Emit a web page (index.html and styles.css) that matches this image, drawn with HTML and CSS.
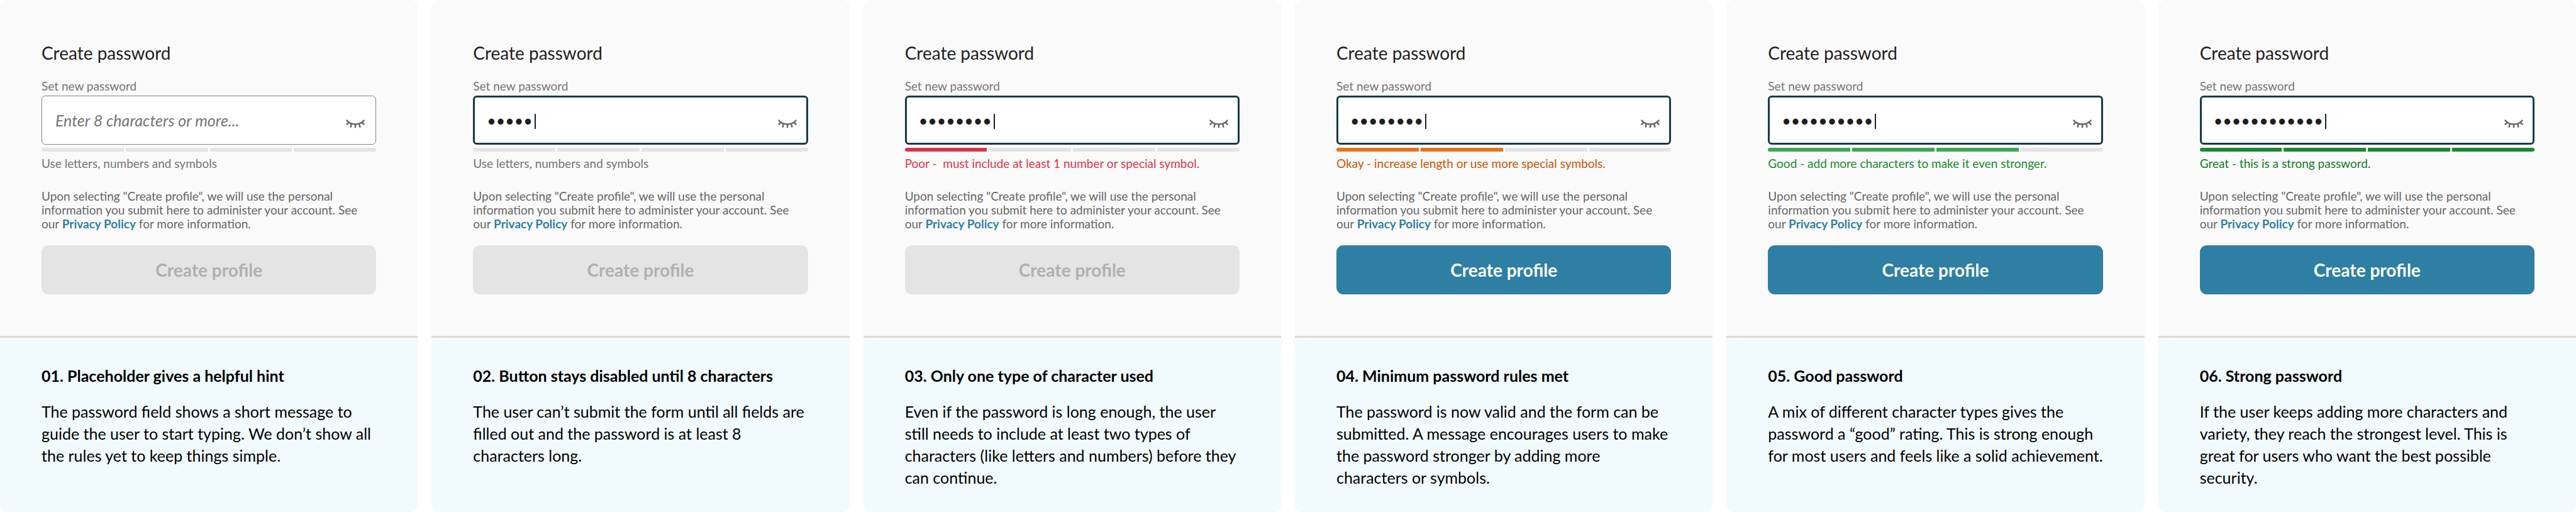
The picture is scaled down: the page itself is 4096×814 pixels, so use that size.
FILE: index.html
```
<!DOCTYPE html>
<html lang="en">
<head>
<meta charset="utf-8">
<title>Create password: field states</title>
<link rel="stylesheet" href="styles.css">
</head>
<body>
<svg class="sprite" aria-hidden="true">
  <symbol id="eye-closed" viewBox="0 -18 44 40">
    <path d="M2 2C7 8 14 11 22 11S37 8 42 2M6.5 6.5 2 11.2M37.5 6.5 42 11.2M12.8 9.8 11.2 17M31.2 9.8 32.8 17M22 11V18"/>
  </symbol>
</svg>
<main class="board">

  <article class="card">
    <form class="form">
      <h2 class="title">Create password</h2>
      <label class="label" for="pw1">Set new password</label>
      <div class="field">
        <input class="input" id="pw1" type="password" placeholder="Enter 8 characters or more...">
        <button class="reveal" type="button" aria-label="Show password"><svg class="eye"><use href="#eye-closed"/></svg></button>
      </div>
      <div class="meter"><span class="bar"></span><span class="bar"></span><span class="bar"></span><span class="bar"></span></div>
      <p class="hint">Use letters, numbers and symbols</p>
      <p class="legal">Upon selecting "Create profile", we will use the personal information you submit here to administer your account. See our <a class="link" href="#">Privacy Policy</a> for more information.</p>
      <button class="submit" type="button" disabled>Create profile</button>
    </form>
    <section class="note">
      <h3 class="note-title">01. Placeholder gives a helpful hint</h3>
      <p class="note-text">The password field shows a short message to guide the user to start typing. We don’t show all the rules yet to keep things simple.</p>
    </section>
  </article>

  <article class="card">
    <form class="form">
      <h2 class="title">Create password</h2>
      <label class="label" for="pw2">Set new password</label>
      <div class="field active">
        <input class="input" id="pw2" type="password" value="abcde"><span class="caret"></span>
        <button class="reveal" type="button" aria-label="Show password"><svg class="eye"><use href="#eye-closed"/></svg></button>
      </div>
      <div class="meter"><span class="bar"></span><span class="bar"></span><span class="bar"></span><span class="bar"></span></div>
      <p class="hint">Use letters, numbers and symbols</p>
      <p class="legal">Upon selecting "Create profile", we will use the personal information you submit here to administer your account. See our <a class="link" href="#">Privacy Policy</a> for more information.</p>
      <button class="submit" type="button" disabled>Create profile</button>
    </form>
    <section class="note">
      <h3 class="note-title">02. Button stays disabled until 8 characters</h3>
      <p class="note-text">The user can’t submit the form until all fields are filled out and the password is at least 8 characters long.</p>
    </section>
  </article>

  <article class="card poor">
    <form class="form">
      <h2 class="title">Create password</h2>
      <label class="label" for="pw3">Set new password</label>
      <div class="field active">
        <input class="input" id="pw3" type="password" value="abcdefgh"><span class="caret"></span>
        <button class="reveal" type="button" aria-label="Show password"><svg class="eye"><use href="#eye-closed"/></svg></button>
      </div>
      <div class="meter"><span class="bar on"></span><span class="bar"></span><span class="bar"></span><span class="bar"></span></div>
      <p class="hint">Poor -&nbsp; must include at least 1 number or special symbol.</p>
      <p class="legal">Upon selecting "Create profile", we will use the personal information you submit here to administer your account. See our <a class="link" href="#">Privacy Policy</a> for more information.</p>
      <button class="submit" type="button" disabled>Create profile</button>
    </form>
    <section class="note">
      <h3 class="note-title">03. Only one type of character used</h3>
      <p class="note-text">Even if the password is long enough, the user still needs to include at least two types of characters (like letters and numbers) before they can continue.</p>
    </section>
  </article>

  <article class="card okay">
    <form class="form">
      <h2 class="title">Create password</h2>
      <label class="label" for="pw4">Set new password</label>
      <div class="field active">
        <input class="input" id="pw4" type="password" value="abcdef12"><span class="caret"></span>
        <button class="reveal" type="button" aria-label="Show password"><svg class="eye"><use href="#eye-closed"/></svg></button>
      </div>
      <div class="meter"><span class="bar on"></span><span class="bar on"></span><span class="bar"></span><span class="bar"></span></div>
      <p class="hint">Okay - increase length or use more special symbols.</p>
      <p class="legal">Upon selecting "Create profile", we will use the personal information you submit here to administer your account. See our <a class="link" href="#">Privacy Policy</a> for more information.</p>
      <button class="submit" type="button">Create profile</button>
    </form>
    <section class="note">
      <h3 class="note-title">04. Minimum password rules met</h3>
      <p class="note-text">The password is now valid and the form can be submitted. A message encourages users to make the password stronger by adding more characters or symbols.</p>
    </section>
  </article>

  <article class="card good">
    <form class="form">
      <h2 class="title">Create password</h2>
      <label class="label" for="pw5">Set new password</label>
      <div class="field active">
        <input class="input" id="pw5" type="password" value="abcdef12!?"><span class="caret"></span>
        <button class="reveal" type="button" aria-label="Show password"><svg class="eye"><use href="#eye-closed"/></svg></button>
      </div>
      <div class="meter"><span class="bar on"></span><span class="bar on"></span><span class="bar on"></span><span class="bar"></span></div>
      <p class="hint">Good - add more characters to make it even stronger.</p>
      <p class="legal">Upon selecting "Create profile", we will use the personal information you submit here to administer your account. See our <a class="link" href="#">Privacy Policy</a> for more information.</p>
      <button class="submit" type="button">Create profile</button>
    </form>
    <section class="note">
      <h3 class="note-title">05. Good password</h3>
      <p class="note-text">A mix of different character types gives the password a “good” rating. This is strong enough for most users and feels like a solid achievement.</p>
    </section>
  </article>

  <article class="card great">
    <form class="form">
      <h2 class="title">Create password</h2>
      <label class="label" for="pw6">Set new password</label>
      <div class="field active">
        <input class="input" id="pw6" type="password" value="abcdef12!?XY"><span class="caret"></span>
        <button class="reveal" type="button" aria-label="Show password"><svg class="eye"><use href="#eye-closed"/></svg></button>
      </div>
      <div class="meter"><span class="bar on"></span><span class="bar on"></span><span class="bar on"></span><span class="bar on"></span></div>
      <p class="hint">Great - this is a strong password.</p>
      <p class="legal">Upon selecting "Create profile", we will use the personal information you submit here to administer your account. See our <a class="link" href="#">Privacy Policy</a> for more information.</p>
      <button class="submit" type="button">Create profile</button>
    </form>
    <section class="note">
      <h3 class="note-title">06. Strong password</h3>
      <p class="note-text">If the user keeps adding more characters and variety, they reach the strongest level. This is great for users who want the best possible security.</p>
    </section>
  </article>

</main>
</body>
</html>
```
FILE: styles.css
```
* {
  box-sizing: border-box;
}

body {
  margin: 0;
  background: #fff;
  font-family: Lato, "Liberation Sans", sans-serif;
}

.sprite {
  display: none;
}

.board {
  display: grid;
  grid-template-columns: repeat(6, 1fr);
  gap: 22px;
  min-height: 100vh;
}

.card {
  --hint: #757575;
  --meter: #e4e4e4;
  display: flex;
  flex-direction: column;
  overflow: hidden;
  border-radius: 11px;
  background: #f1fafd;
}

.poor {
  --hint: #de3348;
  --meter: #de3348;
}

.okay {
  --hint: #c95500;
  --meter: #e97215;
}

.good {
  --hint: #158a2e;
  --meter: #38a852;
}

.great {
  --hint: #137a29;
  --meter: #158a2e;
}

.form {
  display: flex;
  flex-direction: column;
  padding: 67px 66px 66px;
  border-bottom: 3px solid #dedad0;
  background: #fafafa;
}

.title {
  margin: 0 0 24px;
  font-size: 28px;
  font-weight: 400;
  line-height: 34px;
  color: #1f1f1f;
}

.label {
  margin-bottom: 4px;
  font-size: 19px;
  line-height: 23px;
  color: #757575;
}

.field {
  display: flex;
  align-items: center;
  height: 78px;
  padding: 0 17px 0 21px;
  border: 1px solid #858585;
  border-radius: 6px;
  background: #fff;
}

.field.active {
  padding: 0 15px 0 19px;
  border: 3px solid #173a4a;
}

.input {
  flex: 1;
  min-width: 0;
  padding: 0;
  border: 0;
  outline: 0;
  background: none;
  font: 25px/30px Lato, "Liberation Sans", sans-serif;
  color: #1f1f1f;
}

.active .input {
  flex: none;
  field-sizing: content;
}

.input::placeholder {
  font-style: italic;
  color: #757575;
  opacity: 1;
}

.caret {
  width: 2px;
  height: 24px;
  margin: 4px 0 0 3px;
  background: #1f1f1f;
}

.reveal {
  display: flex;
  margin-left: auto;
  padding: 0;
  border: 0;
  background: none;
}

.eye {
  width: 30px;
  height: 27px;
  fill: none;
  stroke: #666;
  stroke-width: 3.7;
  stroke-linecap: round;
}

.meter {
  display: flex;
  gap: 3px;
  margin: 5px 0 7px;
  overflow: hidden;
  border-radius: 3px;
}

.bar {
  flex: 1;
  height: 6px;
  background: #e4e4e4;
}

.bar.on {
  background: var(--meter);
}

.hint {
  margin: 0 0 30px;
  font-size: 19px;
  line-height: 23px;
  color: var(--hint);
}

.legal {
  margin: 0 0 23px;
  font-size: 19px;
  line-height: 22px;
  color: #666;
}

.link {
  font-weight: 700;
  color: #2e7fa3;
  text-decoration: none;
}

.submit {
  height: 78px;
  border: 0;
  border-radius: 11px;
  background: #2e7fa3;
  font: 700 28px/34px Lato, "Liberation Sans", sans-serif;
  color: #fff;
}

.submit:disabled {
  background: #e4e4e4;
  color: #b0b0b0;
}

.note {
  flex: 1;
  padding: 45px 66px 37px;
}

.note-title {
  margin: 0 0 25px;
  font-size: 25px;
  font-weight: 700;
  line-height: 30px;
  color: #000;
}

.note-text {
  margin: 0;
  font-size: 25px;
  line-height: 35px;
  color: #000;
}
```
